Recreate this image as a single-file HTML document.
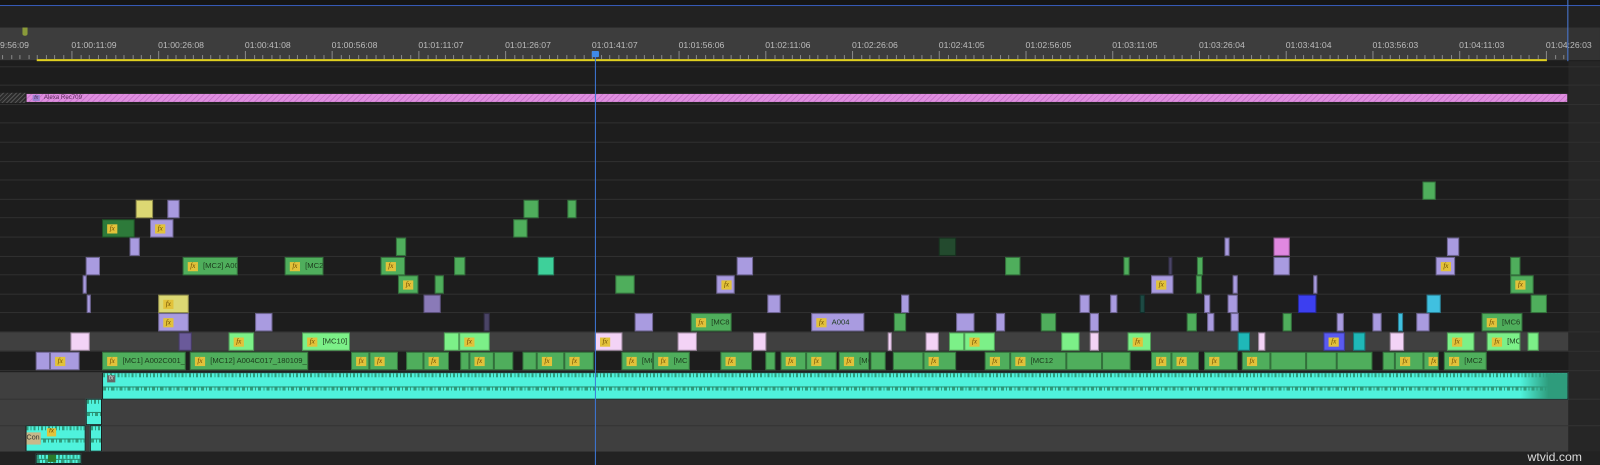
<!DOCTYPE html>
<html><head><meta charset="utf-8">
<style>
html,body{margin:0;padding:0;background:#1e1e1e;overflow:hidden;width:1600px;height:465px}
#w{position:absolute;left:0;top:0;width:1568px;height:456px;transform:scale(1.0204,1.0197);transform-origin:0 0;background:#1d1d1d;font-family:"Liberation Sans",sans-serif}
.a{position:absolute}
.tc{position:absolute;top:39px;font-size:8.5px;color:#bdbdbd;white-space:nowrap}
.cl{position:absolute;box-sizing:border-box;border:1px solid rgba(0,0,0,.35);overflow:hidden;white-space:nowrap;font-size:7.5px;color:#1c3a1c}
.fx{position:absolute;left:4px;top:4px;width:10px;height:9px;background:#e2c23a;color:#6b4a00;font-size:7px;font-style:italic;line-height:9px;text-align:center;font-family:"Liberation Serif",serif}
.lb{position:absolute;left:19px;top:3px}
.ln{position:absolute;left:0;width:1568px;height:1px;background:#303030}
</style></head><body>
<div id="w">
<div class="a" style="left:0;top:0;width:1568px;height:6px;background:#161616"></div>
<div class="a" style="left:0;top:5px;width:1568px;height:1px;background:#3a62c8"></div>
<div class="a" style="left:0;top:6px;width:1568px;height:21px;background:#222"></div>
<div class="a" style="left:0;top:27px;width:1537px;height:32px;background:#3d3d3d"></div>
<div class="a" style="left:1537px;top:27px;width:31px;height:32px;background:#333"></div>
<div class="a" style="left:1536px;top:0;width:1px;height:60px;background:#4a7ad8"></div>
<div class="a" style="left:22px;top:27px;width:5px;height:8px;background:#8a9a3a;border-radius:0 0 2px 2px"></div>
<div class="tc" style="left:0">9:56:09</div>
<div class="tc" style="left:70px">01:00:11:09</div>
<div class="tc" style="left:155px">01:00:26:08</div>
<div class="tc" style="left:240px">01:00:41:08</div>
<div class="tc" style="left:325px">01:00:56:08</div>
<div class="tc" style="left:410px">01:01:11:07</div>
<div class="tc" style="left:495px">01:01:26:07</div>
<div class="tc" style="left:580px">01:01:41:07</div>
<div class="tc" style="left:665px">01:01:56:06</div>
<div class="tc" style="left:750px">01:02:11:06</div>
<div class="tc" style="left:835px">01:02:26:06</div>
<div class="tc" style="left:920px">01:02:41:05</div>
<div class="tc" style="left:1005px">01:02:56:05</div>
<div class="tc" style="left:1090px">01:03:11:05</div>
<div class="tc" style="left:1175px">01:03:26:04</div>
<div class="tc" style="left:1260px">01:03:41:04</div>
<div class="tc" style="left:1345px">01:03:56:03</div>
<div class="tc" style="left:1430px">01:04:11:03</div>
<div class="tc" style="left:1515px">01:04:26:03</div>
<div id="ticks"></div>
<div class="a" style="left:36px;top:58px;width:1480px;height:1.5px;background:#e0d020"></div>
<div id="rows"></div>
<div class="a" style="left:0;top:91px;width:25px;height:10px;background:repeating-linear-gradient(135deg,#2a2a2a 0 2px,#555 2px 3px)"></div>
<div class="a" style="left:25px;top:91px;width:1512px;height:10px;background:repeating-linear-gradient(135deg,#e08ee0 0 3px,#c977cc 3px 4px);border:1px solid #222;box-sizing:border-box;font-size:6px;color:#5a2a5a;line-height:8px"><span style="display:inline-block;background:#9a80d0;width:7px;height:6px;margin:1px 4px 0 6px;font-size:5px;font-style:italic;text-align:center;line-height:6px">fx</span>Alexa Rec709</div>
<div id="clips"></div>
<div class="a" style="left:1497px;top:441px;font-size:12px;color:#dcdcdc">wtvid.com</div>
<div class="a" style="left:582.5px;top:52px;width:1px;height:404px;background:#3d78d8"></div>
<div class="a" style="left:580px;top:50px;width:7px;height:6px;background:#3f8ae8;border-radius:1px"></div>
</div>
<script>
var t='';for(var x=2;x<1537;x+=8.5){var big=(Math.round((x-2)/8.5)%10==8);t+='<div class="a" style="left:'+x+'px;top:'+(big?50:54)+'px;width:1px;height:'+(big?8:4)+'px;background:#888"></div>';}
document.getElementById('ticks').innerHTML=t;
var r='';
r+='<div class="a" style="left:0;top:325px;width:1537px;height:19px;background:#404040"></div>';
r+='<div class="a" style="left:0;top:365px;width:1537px;height:78px;background:#3f3f3f"></div>';
r+='<div class="a" style="left:1537px;top:60px;width:31px;height:383px;background:#262626"></div>';
r+='<div class="a" style="left:0;top:443px;width:1568px;height:13px;background:#222"></div>';
for(var y=325-18.6*14;y<=326;y+=18.6){r+='<div class="ln" style="top:'+Math.round(y)+'px"></div>';}
r+='<div class="ln" style="top:344px"></div><div class="ln" style="top:363px;background:#333"></div><div class="ln" style="top:391px;background:#333"></div><div class="ln" style="top:417px;background:#333"></div>';
document.getElementById('rows').innerHTML=r;
var P='#a99be0',G='#4fae5c',L='#7cf088',W='#f3d3f6',Y='#dcd873',D='#2d7a3a',T='#1fb8b8',B='#3c3ff0',K='#4a4466',C='#40c0e0';
var R={a:177,b:195.5,c:214,d:232.5,e:251,f:269.5,g:288,h:306.5,v:325,w:344};
var cl=[
['a',1394,1407,G],
['b',133,150,Y],['b',164,176,P],['b',513,528,G],['b',556,565,G],
['c',100,132,D,1],['c',147,170,P,1],['c',503,517,G],
['d',127,137,P],['d',388,398,G],['d',920,937,'#234a2e'],['d',1200,1205,P],['d',1248,1264,'#e088e0'],['d',1418,1430,P],
['e',84,98,P],['e',179,233,G,1,'[MC2] A00'],['e',279,317,G,1,'[MC2'],['e',373,397,G,1],['e',445,456,G],['e',527,543,'#3ed09a'],['e',722,738,P],['e',985,1000,G],['e',1101,1107,G],['e',1145,1149,K],['e',1173,1179,G],['e',1248,1264,P],['e',1407,1426,P,1],['e',1480,1490,G],
['f',81,85,P],['f',390,410,G,1],['f',426,435,G],['f',603,622,G],['f',702,720,P,1],['f',1128,1150,P,1],['f',1172,1178,G],['f',1208,1213,P],['f',1287,1291,P],['f',1480,1503,G,1],
['g',85,89,P],['g',155,185,Y,1],['g',415,432,'#8a7ab8'],['g',752,765,P],['g',883,891,P],['g',1058,1068,P],['g',1088,1095,P],['g',1117,1122,'#1d4a44'],['g',1180,1186,P],['g',1203,1213,P],['g',1272,1290,B],['g',1398,1412,C],['g',1500,1516,G],
['h',155,185,P,1],['h',250,267,P],['h',474,480,K],['h',622,640,P],['h',677,717,G,1,'[MC8'],['h',795,847,P,1,'A004'],['h',876,888,G],['h',937,955,P],['h',976,985,P],['h',1020,1035,G],['h',1068,1077,P],['h',1163,1173,G],['h',1183,1190,P],['h',1206,1214,P],['h',1257,1266,G],['h',1310,1317,P],['h',1345,1354,P],['h',1370,1375,C],['h',1388,1401,P],['h',1452,1492,G,1,'[MC6'],
['v',69,88,W],['v',175,188,'#6a5a9a'],['v',224,249,L,1],['v',296,343,L,1,'[MC10]'],['v',435,450,L],['v',450,480,L,1],['v',583,610,W,1],['v',664,683,W],['v',738,751,W],['v',870,874,W],['v',907,920,W],['v',930,945,L],['v',945,975,L,1],['v',1040,1058,L],['v',1068,1077,W],['v',1105,1128,L,1],['v',1213,1225,T],['v',1233,1240,W],['v',1297,1318,'#5a5af0',1],['v',1326,1338,T],['v',1362,1376,W],['v',1418,1445,L,1],['v',1457,1490,L,1,'[MC'],['v',1497,1508,L],
['w',35,49,P],['w',49,78,P,1],['w',100,182,G,1,'[MC1] A002C001_'],['w',186,302,G,1,'[MC12] A004C017_180109_'],['w',344,362,G,1],['w',362,390,G,1],['w',398,415,G],['w',415,440,G,1],['w',451,460,G],['w',460,484,G,1],['w',484,503,G],['w',512,526,G],['w',526,553,G,1],['w',553,582,G,1],['w',609,640,G,1,'[MC8]'],['w',640,676,G,1,'[MC'],['w',706,737,G,1],['w',750,760,G],['w',765,790,G,1],['w',790,820,G,1],['w',822,852,G,1,'[MC'],['w',853,868,G],['w',875,905,G],['w',905,937,G,1],['w',965,990,G,1],['w',990,1045,G,1,'[MC12'],['w',1045,1080,G],['w',1080,1108,G],['w',1128,1148,G,1],['w',1148,1175,G,1],['w',1180,1213,G,1],['w',1217,1245,G,1],['w',1245,1280,G],['w',1280,1310,G],['w',1310,1345,G],['w',1355,1367,G],['w',1367,1395,G,1],['w',1395,1410,G,1],['w',1415,1457,G,1,'[MC2']
];
var h='';
cl.forEach(function(c){h+='<div class="cl" style="left:'+c[1]+'px;top:'+(R[c[0]]+0.5)+'px;width:'+(c[2]-c[1])+'px;height:18px;background:'+c[3]+'">'+(c[4]?'<div class="fx">fx</div>':'')+(c[5]?'<div class="lb">'+c[5]+'</div>':'')+'</div>';});
function wave(x,y,w,hh){var s='<div class="a" style="left:'+x+'px;top:'+y+'px;width:'+w+'px;height:'+hh+'px;background:#4ff2dc;border:1px solid #1b1b1b;box-sizing:border-box;overflow:hidden">';
s+='<div class="a" style="left:0;top:0;width:100%;height:4px;background:repeating-linear-gradient(90deg,#2e9c7c 0 2px,#4ff2dc 2px 4px,#2e9c7c 4px 5px,#4ff2dc 5px 7px)"></div>';
s+='<div class="a" style="left:0;top:'+(hh/2-1)+'px;width:100%;height:4px;background:repeating-linear-gradient(90deg,#2e9c7c 0 3px,#4ff2dc 3px 5px,#2e9c7c 5px 6px,#4ff2dc 6px 8px)"></div>';
s+='<div class="a" style="left:0;top:'+(hh/2-1)+'px;width:100%;height:1px;background:#2a8a70"></div>';
return s+'</div>';}
h+=wave(100,365,1437,27);
h+='<div class="a" style="left:1490px;top:366px;width:46px;height:25px;background:linear-gradient(90deg,rgba(46,156,124,0),#2e9c7c 60%)"></div>';
h+='<div class="a" style="left:105px;top:368px;width:8px;height:7px;background:#666;font-size:6px;color:#ddd;font-style:italic;text-align:center;line-height:7px">fx</div>';
h+=wave(84,391,16,26);
h+=wave(25,417,59,26)+wave(88,417,12,26);
h+='<div class="a" style="left:26px;top:424px;width:14px;height:12px;background:#c8b88a;font-size:7px;color:#333;line-height:12px">Con</div>';
h+='<div class="a" style="left:46px;top:420px;width:9px;height:8px;background:#e2c23a;font-size:6px;font-style:italic;text-align:center;color:#6b4a00">fx</div>';
h+=wave(35,445,45,10);
h+='<div class="a" style="left:47px;top:446px;width:8px;height:7px;background:#2a7a2a"></div>';
document.getElementById('clips').innerHTML=h;
</script>
</body></html>
